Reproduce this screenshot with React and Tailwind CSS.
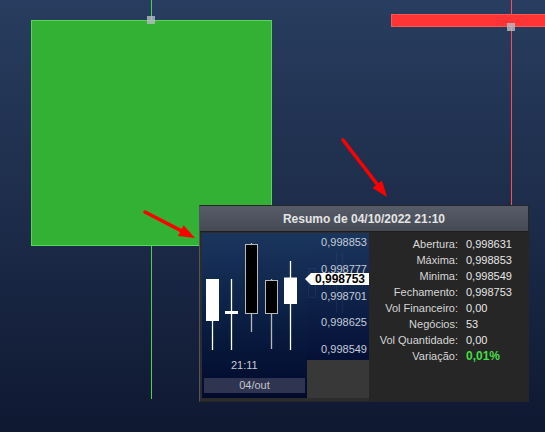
import React from "react";

const font = { fontFamily: '"Liberation Sans", Arial, sans-serif' };

function Candles() {
  return (
    <svg width="105" height="120" className="block" viewBox="0 0 105 120">
      {/* C1 white */}
      <line x1="10.5" y1="88" x2="10.5" y2="117" stroke="#ffffff" strokeWidth="1.3" />
      <rect x="4" y="46" width="13" height="42" fill="#ffffff" />
      {/* C2 doji */}
      <line x1="29.5" y1="46" x2="29.5" y2="117" stroke="#ffffff" strokeWidth="1.3" />
      <rect x="23" y="78" width="13" height="3" fill="#ffffff" />
      {/* C3 black */}
      <line x1="49.5" y1="10" x2="49.5" y2="99" stroke="#b8b8b8" strokeWidth="1.3" />
      <rect x="43.5" y="11.5" width="12" height="69" fill="#000000" stroke="#b8b8b8" strokeWidth="1" />
      {/* C4 black */}
      <line x1="69.5" y1="46" x2="69.5" y2="116" stroke="#b8b8b8" strokeWidth="1.3" />
      <rect x="63.5" y="47.5" width="12" height="33" fill="#000000" stroke="#b8b8b8" strokeWidth="1" />
      {/* C5 white */}
      <line x1="88.5" y1="28" x2="88.5" y2="117" stroke="#ffffff" strokeWidth="1.3" />
      <rect x="82" y="44.5" width="13" height="26.5" fill="#ffffff" />
    </svg>
  );
}

const rows = [
  ["Abertura:", "0,998631"],
  ["Máxima:", "0,998853"],
  ["Minima:", "0,998549"],
  ["Fechamento:", "0,998753"],
  ["Vol Financeiro:", "0,00"],
  ["Negócios:", "53"],
  ["Vol Quantidade:", "0,00"],
];

export default function App() {
  return (
    <div
      className="relative w-[545px] h-[432px] overflow-hidden bg-linear-to-b from-[#283d5f] via-[#1d2c4a] to-[#0f1831]"
      style={font}
    >
      {/* chart canvas items */}
      <div className="absolute left-[151px] top-0 w-px h-[20px] bg-[#4ecf4e]" />
      <div className="absolute left-[31px] top-[20px] w-[241px] h-[226px] bg-[#32b134] border border-[#5ad45a]" />
      <div className="absolute left-[151px] top-[246px] w-px h-[153px] bg-[#4ecf4e]" />
      <div className="absolute left-[147px] top-[16px] w-[8px] h-[8px] bg-[#b9bcc4]/80" />

      <div className="absolute left-[511px] top-0 w-px h-[210px] bg-[#ff4d4d]" />
      <div className="absolute left-[391px] top-[14px] w-[160px] h-[13px] bg-[#ff3434] border border-[#ff5555]" />
      <div className="absolute left-[507px] top-[23px] w-[8px] h-[8px] bg-[#b9bcc4]/80" />

      {/* summary panel */}
      <div className="absolute left-[199px] top-[205px] w-[330px] h-[197px] border border-[#262626] border-l-[#50555f] bg-[#2c2c2c] flex flex-col">
        <div className="h-[26px] shrink-0 border-b border-[#1e1e1e] bg-linear-to-b from-[#565c68] to-[#454a55] flex items-center justify-center">
          <span className="text-[12px] font-bold text-[#e4e4e4] leading-none">Resumo de 04/10/2022 21:10</span>
        </div>
        <div className="flex flex-1 min-h-0">
          <div className="flex w-[169px] shrink-0 pl-[2px] pt-[1px] pb-[3px]">
            <div className="w-[105px] flex flex-col bg-linear-to-b from-[#1b365e] to-[#020a2c]">
              <Candles />
              <div className="h-[24px] flex items-center pl-[29px] text-[11px] text-[#c8ccd4]">21:11</div>
              <div className="mx-[2px] h-[15px] mt-[1px] bg-[#2f3450] flex items-center justify-center text-[11px] text-[#c0c4cc]">
                04/out
              </div>
            </div>
            <div className="w-[62px] flex flex-col">
              <div className="relative h-[127px] bg-linear-to-b from-[#1b365e] to-[#061037] flex flex-col justify-between items-end pr-[2px] pt-[2px] pb-[4px] text-[11px] leading-[14px] text-[#c4ccd8]">
                <div className="absolute left-[1px] top-[35px] w-[8px] h-[30px] border border-white/5" />
                <div className="absolute left-[29px] top-[20px] w-[7px] h-[60px] border-x border-white/5" />
                <span>0,998853</span>
                <span>0,998777</span>
                <span>0,998701</span>
                <span>0,998625</span>
                <span>0,998549</span>
                <div className="absolute left-[-2px] top-[40px] flex items-center h-[12px]">
                  <div className="w-0 h-0 border-y-[6px] border-y-transparent border-r-[6px] border-r-white" />
                  <div className="h-[12px] w-[58px] bg-white flex items-center justify-center text-[12px] font-bold text-black leading-none">
                    0,998753
                  </div>
                </div>
              </div>
              <div className="flex-1 bg-[#383838]" />
            </div>
          </div>
          <div className="flex-1 bg-[#262626] pt-[4px]">
            <div className="grid grid-cols-[89px_1fr] gap-x-[8px] text-[11px] leading-[16px]">
              {rows.map(([l, v]) => (
                <React.Fragment key={l}>
                  <span className="text-right text-[#d6d6d6] whitespace-nowrap">{l}</span>
                  <span className="text-[#e6e6e6]">{v}</span>
                </React.Fragment>
              ))}
              <span className="text-right text-[#d6d6d6]">Variação:</span>
              <span className="text-[#44dd44] font-bold text-[12px]">0,01%</span>
            </div>
          </div>
        </div>
      </div>

      {/* red arrows */}
      <svg className="absolute inset-0 pointer-events-none" width="545" height="432">
        <line x1="145" y1="212" x2="181" y2="230.6" stroke="#ff0000" strokeWidth="3.5" strokeLinecap="round" />
        <polygon points="195,238 178,235.9 183.6,225.3" fill="#ff0000" />
        <line x1="343" y1="140" x2="377.2" y2="184.3" stroke="#ff0000" strokeWidth="3.5" strokeLinecap="round" />
        <polygon points="387,197 372.5,188 382,180.6" fill="#ff0000" />
      </svg>
    </div>
  );
}
